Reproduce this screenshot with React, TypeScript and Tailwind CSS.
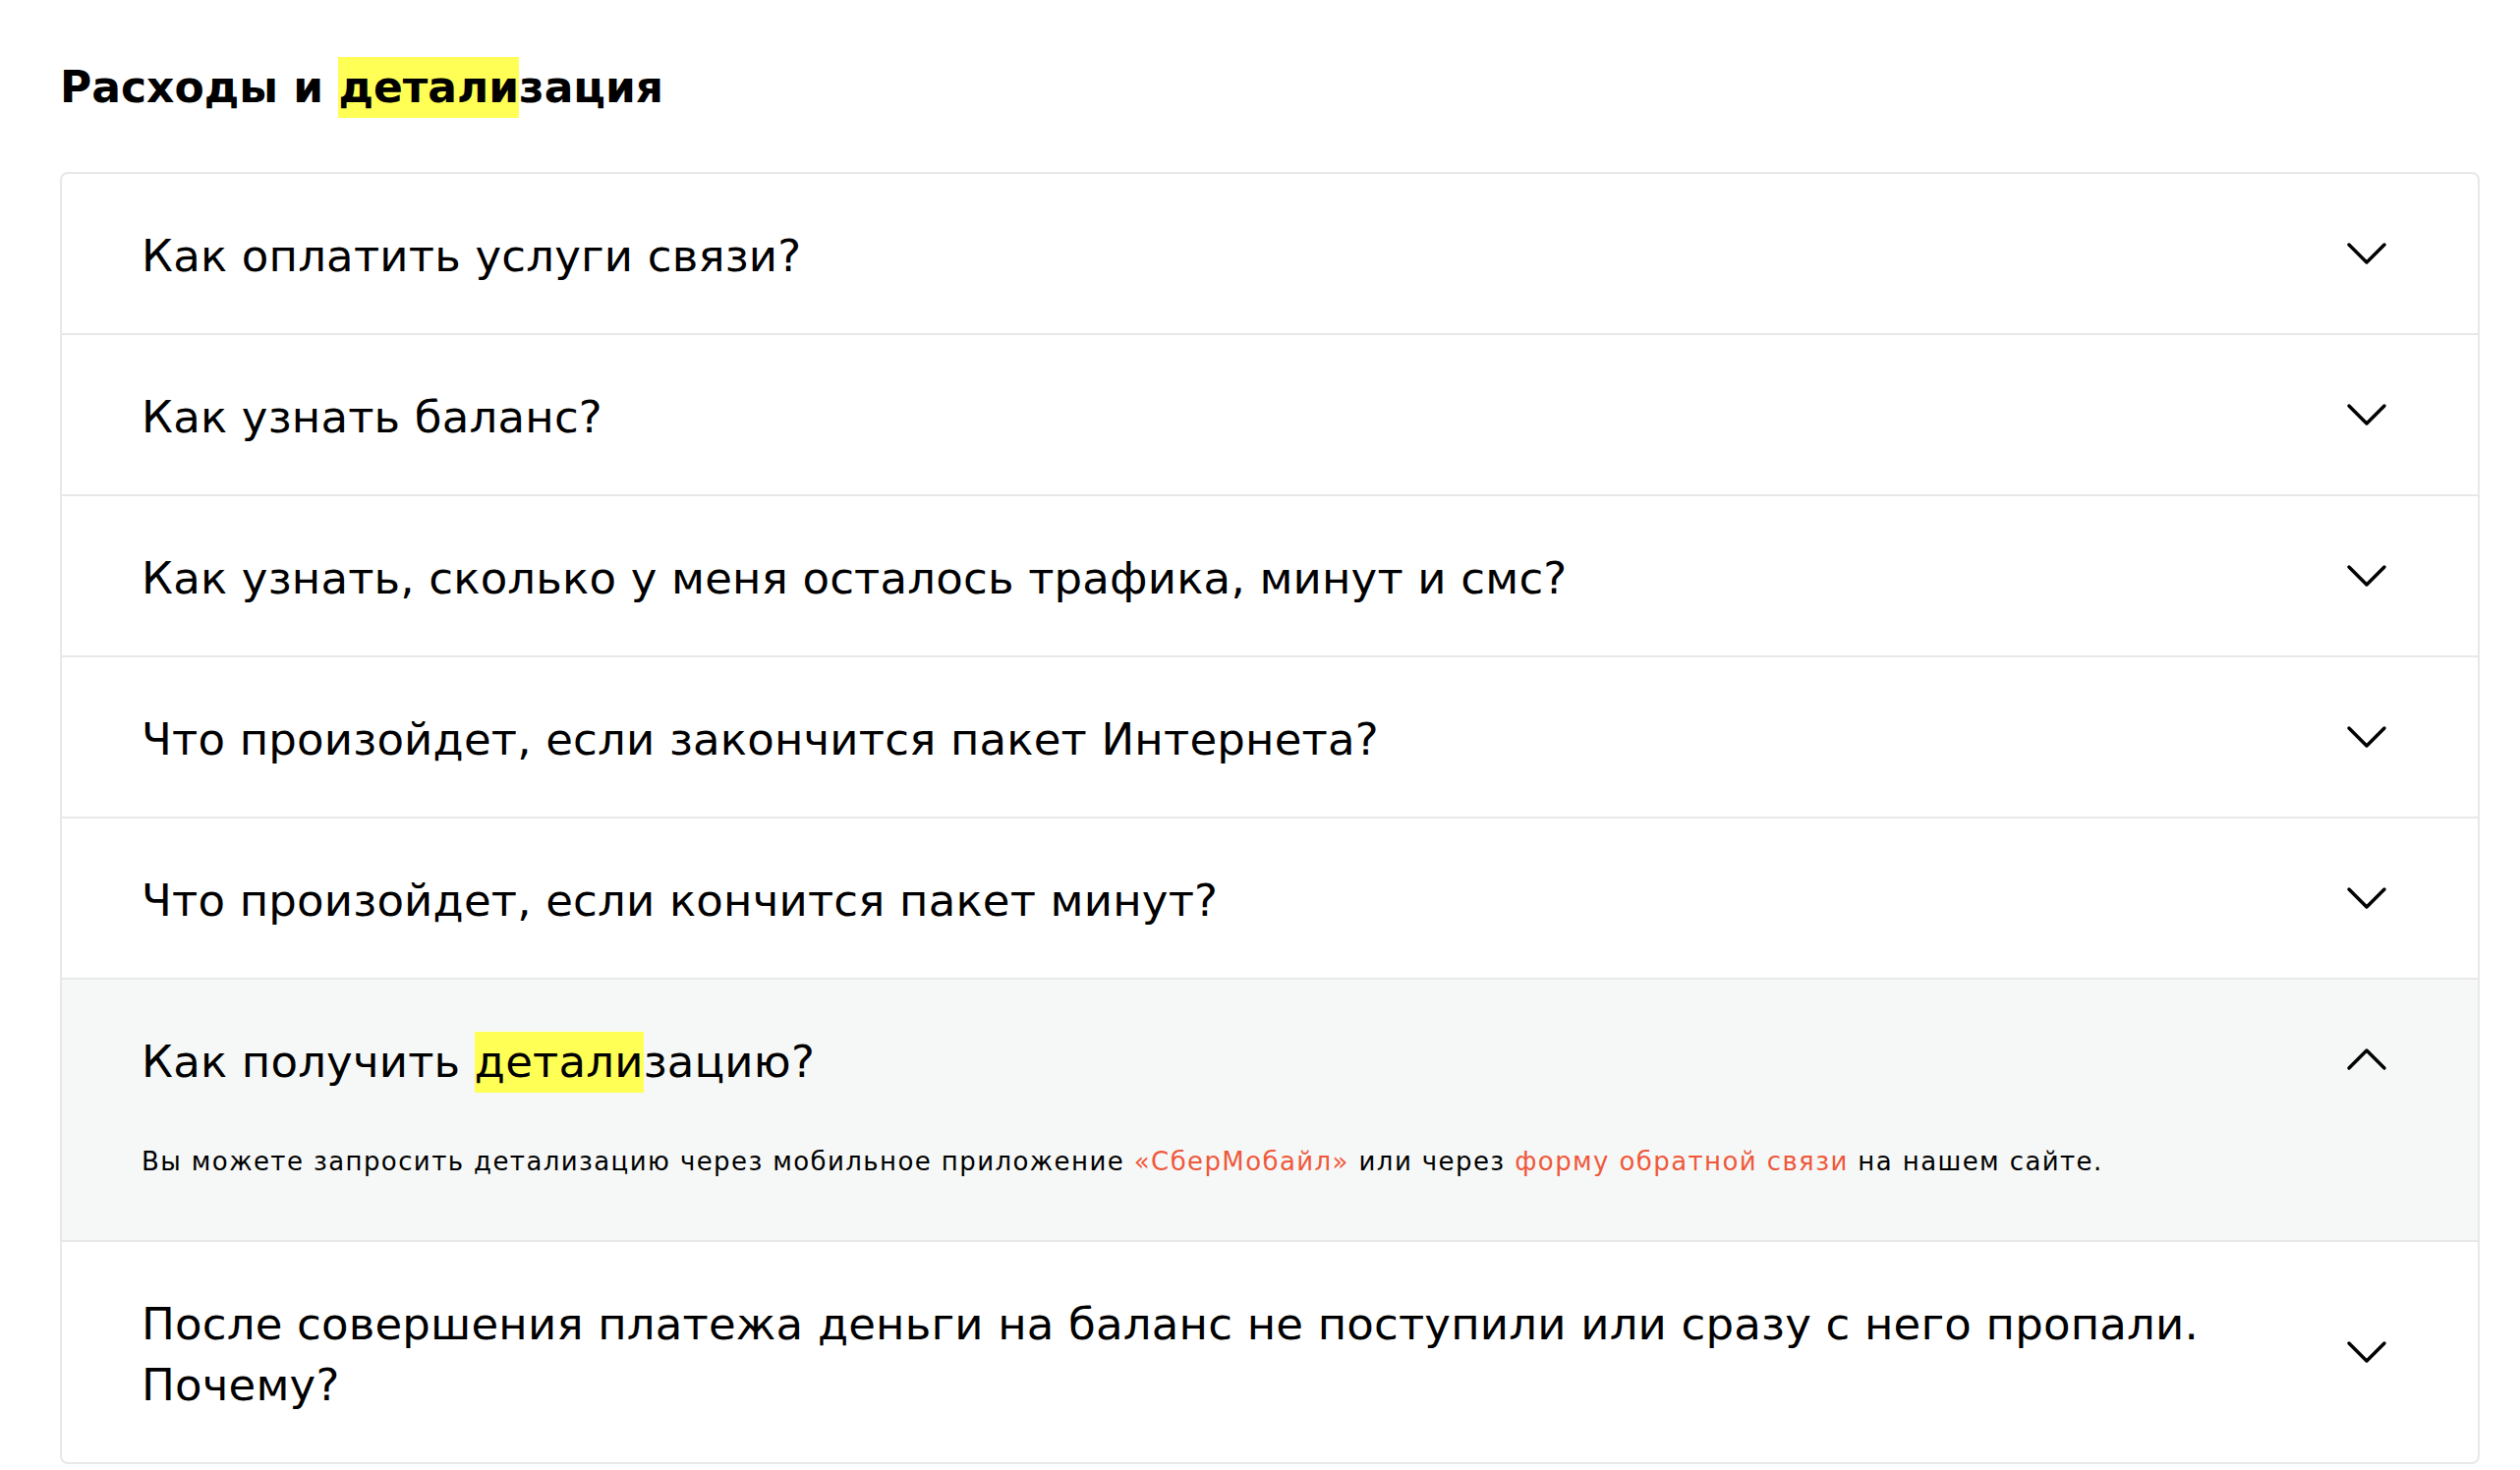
import { ChevronDown, ChevronUp } from "lucide-react";
import type { ReactNode } from "react";

type Item = {
  question: ReactNode;
  answer?: ReactNode;
};

const Mark = ({ children }: { children: ReactNode }) => (
  <span className="inline-block bg-[#ffff55] leading-[62px]">{children}</span>
);

const items: Item[] = [
  { question: "Как оплатить услуги связи?" },
  { question: "Как узнать баланс?" },
  { question: "Как узнать, сколько у меня осталось трафика, минут и смс?" },
  { question: "Что произойдет, если закончится пакет Интернета?" },
  { question: "Что произойдет, если кончится пакет минут?" },
  {
    question: (
      <>
        Как получить <Mark>детали</Mark>зацию?
      </>
    ),
    answer: (
      <>
        Вы можете запросить детализацию через мобильное приложение{" "}
        <a className="text-[#f0583c]">«СберМобайл»</a> или через{" "}
        <a className="text-[#f0583c]">форму обратной связи</a> на нашем сайте.
      </>
    ),
  },
  {
    question:
      "После совершения платежа деньги на баланс не поступили или сразу с него пропали. Почему?",
  },
];

export default function App() {
  return (
    <div className="min-h-screen bg-white font-['DejaVu_Sans',sans-serif] text-black">
      <div className="pl-[61px] pr-[41px] pt-[58px]">
        <h2 className="text-[44px] font-bold leading-[62px]">
          Расходы и <Mark>детали</Mark>зация
        </h2>

        <div className="mt-[55px] rounded-lg border-2 border-[#e8e8e8] bg-white divide-y-2 divide-[#e8e8e8] overflow-hidden">
          {items.map((item, i) => {
            const open = !!item.answer;
            return (
              <div key={i} className={open ? "bg-[#f6f8f7]" : ""}>
                <div className="flex items-center pl-[81px] pr-[77px]">
                  <div className="flex-1 pt-[53px] pb-[47px] pr-[80px] text-[45px] leading-[62px] tracking-[0.2px]">
                    {item.question}
                  </div>
                  {open ? (
                    <ChevronUp size={72} strokeWidth={1.15} className="shrink-0" />
                  ) : (
                    <ChevronDown size={72} strokeWidth={1.15} className="shrink-0" />
                  )}
                </div>
                {open && (
                  <div className="pl-[81px] pr-[77px] pt-[5px] pb-[62px] text-[26px] leading-[36px] tracking-[1.4px]">
                    {item.answer}
                  </div>
                )}
              </div>
            );
          })}
        </div>
      </div>
    </div>
  );
}
